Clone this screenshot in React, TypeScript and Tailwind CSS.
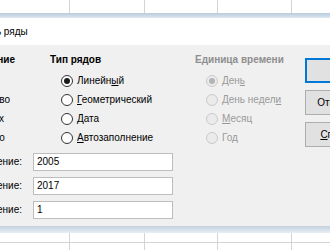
import type { ReactNode } from "react";

const font = { fontFamily: '"Liberation Sans", Arial, sans-serif' };

function GridStrip() {
  return (
    <div className="flex h-full">
      <div className="w-[70px] shrink-0 border-r border-[#d4d4d4]" />
      <div className="w-[75px] shrink-0 border-r border-[#d4d4d4]" />
      <div className="w-[73px] shrink-0 border-r border-[#d4d4d4]" />
      <div className="w-[74px] shrink-0 border-r border-[#d4d4d4]" />
      <div className="flex-1" />
    </div>
  );
}

function Radio({
  label,
  checked = false,
  disabled = false,
}: {
  label: ReactNode;
  checked?: boolean;
  disabled?: boolean;
}) {
  return (
    <div className="flex h-[19px] items-center gap-[4px] pl-[11px]">
      <span
        className={`flex h-[12px] w-[12px] shrink-0 items-center justify-center rounded-full border ${
          disabled
            ? "border-[#cacaca] bg-[#ebebeb]"
            : "border-[#333333] bg-white"
        }`}
      >
        {checked && (
          <span
            className={`h-[6px] w-[6px] rounded-full ${
              disabled ? "bg-[#b4b4b4]" : "bg-[#1a1a1a]"
            }`}
          />
        )}
      </span>
      <span
        className={`whitespace-nowrap ${
          disabled ? "text-[#9a9a9a]" : "text-black"
        }`}
      >
        {label}
      </span>
    </div>
  );
}

function Field({ label, value }: { label: string; value: string }) {
  return (
    <div className="flex h-[18px] items-center">
      <div className="flex w-[73px] shrink-0 justify-end">
        <span className="shrink-0 whitespace-nowrap">{label}</span>
      </div>
      <div className="ml-[11px] flex h-full w-[140px] items-center border border-[#bdbdbd] bg-white px-[3px]">
        {value}
      </div>
    </div>
  );
}

export default function App() {
  return (
    <div
      className="flex h-[250px] w-[330px] flex-col overflow-hidden bg-white text-[10px] leading-[16px] text-black"
      style={font}
    >
      <div className="h-[13px] shrink-0">
        <GridStrip />
      </div>

      <div className="-ml-[100px] flex w-[500px] shrink-0 flex-col">
        <div className="h-[5px] bg-gradient-to-b from-[#b9cbdc] to-[#dce7f1]" />
        <div className="flex h-[27px] items-center bg-white pl-[52px]">
          Заполнить ряды
        </div>

        <div className="flex h-[181px] bg-[#f0f0f0]">
          <div className="flex w-[405px] shrink-0 flex-col pl-[49px] pt-[7px]">
            <div className="flex">
              <div className="w-[101px] shrink-0">
                <div className="font-bold">Направление</div>
                <div className="mt-[3px]">
                  <Radio label="Вниз" checked />
                  <Radio label="Вправо" />
                  <Radio label="Вверх" />
                  <Radio label="Влево" />
                </div>
              </div>
              <div className="w-[145px] shrink-0">
                <div className="font-bold">Тип рядов</div>
                <div className="mt-[3px]">
                  <Radio
                    label={
                      <>
                        Линейн<u>ы</u>й
                      </>
                    }
                    checked
                  />
                  <Radio
                    label={
                      <>
                        <u>Г</u>еометрический
                      </>
                    }
                  />
                  <Radio
                    label={
                      <>
                        <u>Д</u>ата
                      </>
                    }
                  />
                  <Radio
                    label={
                      <>
                        <u>А</u>втозаполнение
                      </>
                    }
                  />
                </div>
              </div>
              <div className="w-[110px] shrink-0">
                <div className="whitespace-nowrap font-bold text-[#8e8e8e]">
                  Единица времени
                </div>
                <div className="mt-[3px]">
                  <Radio
                    label={
                      <>
                        Ден<u>ь</u>
                      </>
                    }
                    checked
                    disabled
                  />
                  <Radio
                    label={
                      <>
                        День недел<u>и</u>
                      </>
                    }
                    disabled
                  />
                  <Radio
                    label={
                      <>
                        <u>М</u>есяц
                      </>
                    }
                    disabled
                  />
                  <Radio
                    label={
                      <>
                        Го<u>д</u>
                      </>
                    }
                    disabled
                  />
                </div>
              </div>
            </div>

            <div className="mt-[6px] flex flex-col gap-[6px]">
              <Field label="Начальное значение:" value="2005" />
              <Field label="Конечное значение:" value="2017" />
              <Field label="Приращение:" value="1" />
            </div>
          </div>

          <div className="flex flex-col gap-[7px] pt-[13px]">
            <button className="flex h-[25px] w-[70px] items-center justify-center border-2 border-[#0078d7] bg-[#e1e1e1]">
              ОК
            </button>
            <button className="flex h-[25px] w-[70px] items-center justify-center border border-[#adadad] bg-[#e1e1e1]">
              Отменить
            </button>
            <button className="flex h-[25px] w-[70px] items-center justify-center border border-[#adadad] bg-[#e1e1e1]">
              <span>
                <u>С</u>правка
              </span>
            </button>
          </div>
        </div>

        <div className="h-[7px] bg-gradient-to-b from-[#c3d2df] to-[#e8eef4]" />
      </div>

      <div className="flex min-h-0 flex-1 flex-col">
        <div className="h-[10px] border-b border-[#d4d4d4]">
          <GridStrip />
        </div>
        <div className="flex-1">
          <GridStrip />
        </div>
      </div>
    </div>
  );
}
